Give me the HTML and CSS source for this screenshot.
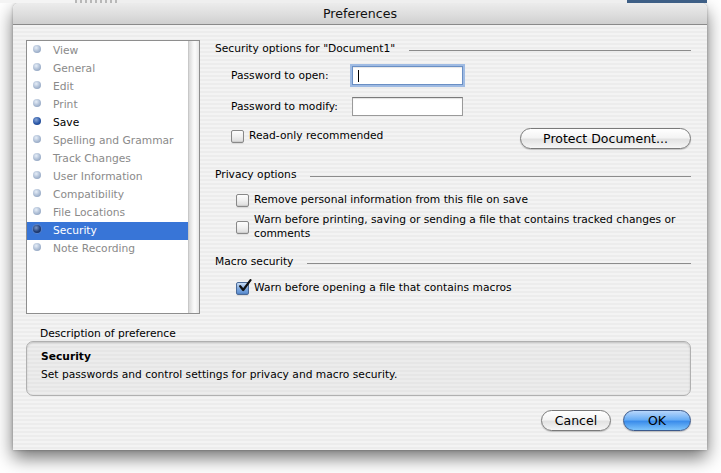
FILE: index.html
```html
<!DOCTYPE html>
<html>
<head>
<meta charset="utf-8">
<link rel="stylesheet" href="styles.css">
</head>
<body>
<div class="topstrip"><span class="ts-gray"></span><span class="ts-dots"></span><span class="ts-fill"></span><span class="ts-blue"></span></div>
<div class="window">
  <div class="titlebar">Preferences</div>
  <div class="content">
    <div class="main">
      <div class="list">
        <div class="items">
          <div class="item"><span class="dot"></span>View</div>
          <div class="item"><span class="dot"></span>General</div>
          <div class="item"><span class="dot"></span>Edit</div>
          <div class="item"><span class="dot"></span>Print</div>
          <div class="item active"><span class="dot dark"></span>Save</div>
          <div class="item"><span class="dot"></span>Spelling and Grammar</div>
          <div class="item"><span class="dot"></span>Track Changes</div>
          <div class="item"><span class="dot"></span>User Information</div>
          <div class="item"><span class="dot"></span>Compatibility</div>
          <div class="item"><span class="dot"></span>File Locations</div>
          <div class="item selected"><span class="dot sel"></span>Security</div>
          <div class="item"><span class="dot"></span>Note Recording</div>
        </div>
        <div class="scrolltrack"></div>
      </div>
      <div class="panel">
        <div class="group-head"><span>Security options for "Document1"</span><span class="rule"></span></div>
        <div class="pwrow first"><span class="pwlabel">Password to open:</span><span class="field focused"><span class="caret"></span></span></div>
        <div class="pwrow second"><span class="pwlabel">Password to modify:</span><span class="field"></span></div>
        <div class="rorow">
          <label class="cb ro"><span class="box"></span>Read-only recommended</label>
          <span class="btn protect">Protect Document...</span>
        </div>
        <div class="group-head privacy"><span>Privacy options</span><span class="rule"></span></div>
        <label class="cb c1"><span class="box"></span>Remove personal information from this file on save</label>
        <label class="cb c2"><span class="box mid"></span><span>Warn before printing, saving or sending a file that contains tracked changes or<br>comments</span></label>
        <div class="group-head macro"><span>Macro security</span><span class="rule"></span></div>
        <label class="cb c3"><span class="box checked"><svg width="15" height="15" viewBox="0 0 15 15"><path d="M3.2 7.2 L6.2 11 L13.5 1.2" fill="none" stroke="#111" stroke-width="2.2" stroke-linecap="round" stroke-linejoin="round"/></svg></span>Warn before opening a file that contains macros</label>
      </div>
    </div>
    <div class="desc-label">Description of preference</div>
    <div class="desc-box">
      <div class="desc-title">Security</div>
      <div class="desc-text">Set passwords and control settings for privacy and macro security.</div>
    </div>
    <div class="buttons">
      <span class="btn cancel">Cancel</span>
      <span class="btn ok">OK</span>
    </div>
  </div>
</div>
</body>
</html>
```

FILE: styles.css
```css
html, body {
  margin: 0;
  padding: 0;
  background: #ffffff;
}
body {
  width: 721px;
  height: 473px;
  overflow: hidden;
  font-family: "DejaVu Sans", sans-serif;
  font-size: 10.7px;
  color: #000;
}
.topstrip {
  display: flex;
  height: 3px;
}
.ts-gray {
  width: 75px;
  background: #f4f4f4;
}
.ts-dots {
  width: 45px;
  background: repeating-linear-gradient(90deg, #b8b8b8 0 2px, #eeeeee 2px 5px);
}
.ts-fill {
  flex: 1;
  background: #efefef;
}
.ts-blue {
  width: 80px;
  margin-right: 14px;
  background: #3e5f86;
}
.window {
  margin-left: 13px;
  width: 694px;
  height: 447px;
  border-radius: 6px 6px 0 0;
  box-shadow: 0 8px 18px rgba(0,0,0,0.55), 0 0 3px rgba(0,0,0,0.3);
  background: repeating-linear-gradient(180deg, #ececec 0 2px, #f3f3f3 2px 4px);
  display: flex;
  flex-direction: column;
}
.titlebar {
  height: 21px;
  line-height: 21px;
  text-align: center;
  font-size: 12.6px;
  color: #111;
  border-radius: 6px 6px 0 0;
  background: linear-gradient(180deg, #ececec 0%, #dcdcdc 60%, #cfcfcf 100%);
  border-bottom: 1px solid #8a8a8a;
}
.content {
  flex: 1;
  display: flex;
  flex-direction: column;
  padding: 0 16px 0 13px;
}
.main {
  display: flex;
  padding-top: 15px;
}
.list {
  width: 172px;
  height: 272px;
  border: 1px solid #8e8e8e;
  background: #fff;
  display: flex;
}
.items {
  flex: 1;
  padding-top: 1px;
}
.item {
  height: 18px;
  line-height: 18px;
  display: flex;
  align-items: center;
  color: #8a8a8a;
  padding-left: 6px;
}
.item.active {
  color: #000;
}
.item.selected {
  background: #3875d7;
  color: #fff;
}
.dot {
  width: 8px;
  height: 8px;
  border-radius: 50%;
  margin-right: 12px;
  margin-top: -4px;
  background: radial-gradient(circle at 40% 35%, #e6eef8 0%, #a9bad2 55%, #7f93b2 100%);
}
.dot.dark {
  background: radial-gradient(circle at 40% 35%, #8aa7d6 0%, #2b58a8 55%, #1a3a78 100%);
}
.dot.sel {
  background: radial-gradient(circle at 40% 35%, #7a96c6 0%, #223f78 55%, #10224a 100%);
  box-shadow: 0 0 0 1px #5a80c4;
}
.scrolltrack {
  width: 10px;
  background: linear-gradient(90deg, #d8d8d8 0%, #f4f4f4 40%, #fbfbfb 60%, #e6e6e6 100%);
  border-left: 1px solid #c8c8c8;
}
.panel {
  flex: 1;
  padding-left: 15px;
  padding-top: 2px;
  display: flex;
  flex-direction: column;
}
.group-head {
  display: flex;
  align-items: center;
  height: 14px;
  line-height: 14px;
}
.group-head .rule {
  flex: 1;
  height: 1px;
  background: #8c8c8c;
  margin-left: 14px;
  margin-top: 3px;
}
.group-head.privacy { margin-top: 19px; }
.group-head.macro { margin-top: 14px; }
.pwrow {
  display: flex;
  align-items: center;
  height: 19px;
  padding-left: 16px;
}
.pwrow.first { margin-top: 10px; }
.pwrow.second { margin-top: 12px; }
.pwlabel {
  width: 121px;
}
.field {
  width: 109px;
  height: 17px;
  border: 1px solid #9a9a9a;
  border-top-color: #7a7a7a;
  background: #fff;
  box-shadow: inset 0 1px 1px rgba(0,0,0,0.12);
  display: flex;
  align-items: center;
}
.field.focused {
  border-color: #6a8fc4;
  box-shadow: 0 0 0 2px #9fbbe3, inset 0 1px 1px rgba(0,0,0,0.1);
}
.caret {
  width: 1px;
  height: 12px;
  background: #000;
  margin-left: 5px;
}
.rorow {
  display: flex;
  justify-content: space-between;
  align-items: flex-start;
  margin-top: 12px;
  height: 21px;
}
.cb {
  display: flex;
  align-items: center;
  line-height: 14px;
}
.cb .box {
  width: 11px;
  height: 11px;
  border: 1px solid #888;
  border-radius: 2px;
  background: linear-gradient(180deg, #fdfdfd 0%, #f0f0f0 50%, #dcdcdc 100%);
  box-shadow: inset 0 -1px 1px rgba(0,0,0,0.08), 0 1px 0 rgba(0,0,0,0.08);
  margin-right: 5px;
  position: relative;
  flex-shrink: 0;
}
.cb.ro {
  padding-left: 16px;
  margin-top: 1px;
}
.cb.c1 { padding-left: 21px; margin-top: 11px; }
.cb.c2 { padding-left: 21px; margin-top: 6px; }
.cb.c3 { padding-left: 21px; margin-top: 12px; }
.box.checked {
  background: linear-gradient(180deg, #c9ddf5 0%, #7fa8dc 50%, #5a8fd4 100%);
  border-color: #4a6a98;
}
.box.checked svg {
  position: absolute;
  left: 0px;
  top: -4px;
}
.btn {
  display: inline-flex;
  align-items: center;
  justify-content: center;
  height: 19px;
  border: 1px solid #7a7a7a;
  border-radius: 11px;
  font-size: 12.5px;
  background: linear-gradient(180deg, #ffffff 0%, #f4f4f4 45%, #e2e2e2 55%, #f6f6f6 100%);
  box-shadow: 0 1px 1px rgba(0,0,0,0.2);
  color: #000;
}
.btn.protect {
  width: 169px;
}
.desc-label {
  margin-top: 13px;
  line-height: 14px;
  padding-left: 14px;
}
.desc-box {
  margin-top: 0px;
  border: 1px solid #b0b0b0;
  border-radius: 7px;
  background: repeating-linear-gradient(180deg, #e6e6e6 0 2px, #ececec 2px 4px);
  box-shadow: inset 0 1px 2px rgba(0,0,0,0.15);
  padding-left: 14px;
  padding-top: 8px;
  box-sizing: border-box;
  height: 55px;
}
.desc-title {
  font-weight: bold;
  line-height: 14px;
}
.desc-text {
  margin-top: 4px;
  line-height: 14px;
}
.buttons {
  display: flex;
  justify-content: flex-end;
  gap: 12px;
  margin-top: 14px;
}
.btn.cancel {
  width: 68px;
}
.btn.ok {
  width: 66px;
  border-color: #3c5a8c;
  background: linear-gradient(180deg, #b7d6fb 0%, #6aaef5 45%, #3b8deb 55%, #7ec4fb 100%);
}
```
